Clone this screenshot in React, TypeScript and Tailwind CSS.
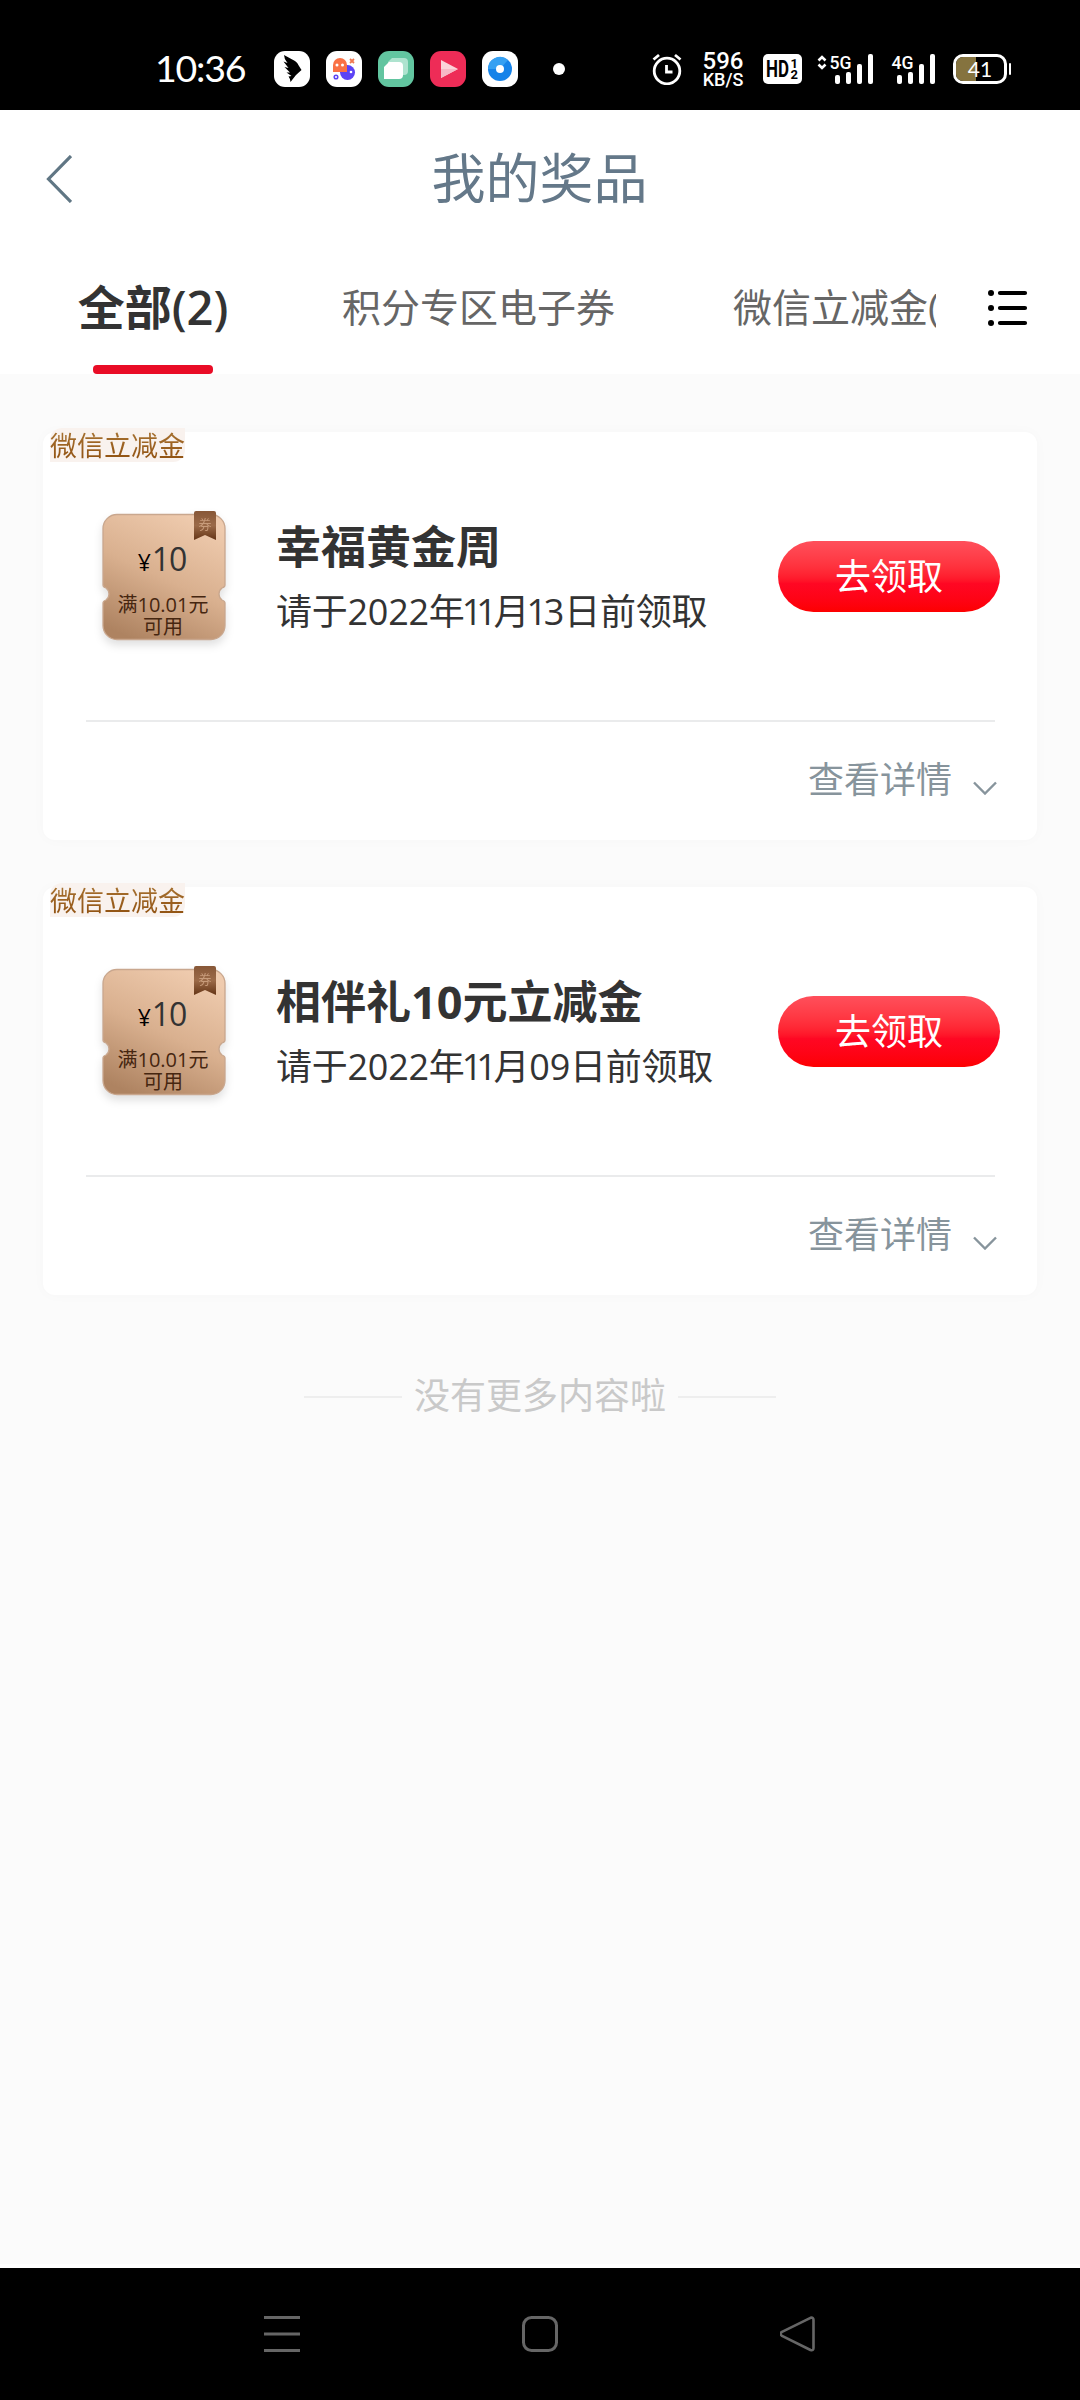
import { Fragment, ReactNode } from "react"

type Prize = {
    id: number
    tag: string
    amount: string
    title: string
    date: string
}

const prizes: Prize[] = [
    { id: 1, tag: "微信立减金", amount: "10", title: "幸福黄金周", date: "请于2022年11月13日前领取" },
    { id: 2, tag: "微信立减金", amount: "10", title: "相伴礼10元立减金", date: "请于2022年11月09日前领取" },
]

// the digit 1 is set tighter than the other figures
const Figures = ({ text }: { text: string }) => (
    <>
        {text.split(/(1)/).map((part, i) =>
            part === "1" ? <span key={i} className="-ml-[0.08em] tracking-[-0.09em]">1</span> : <Fragment key={i}>{part}</Fragment>
        )}
    </>
)

const AppIcon = ({ className, children }: { className: string, children: ReactNode }) => (
    <div className={`size-9 rounded-[11px] overflow-hidden ${className}`}>
        <svg viewBox="0 0 36 36" className="size-9">{children}</svg>
    </div>
)

const Signal = ({ label, arrows, className }: { label: string, arrows?: boolean, className: string }) => (
    <svg viewBox="0 0 56 32" className={className} fill="#fff">
        {arrows && <path d="M1.5 7.5 5 4l3.5 3.5M1.5 11.500 5 15l3.500-3.500" fill="none" stroke="#fff" strokeWidth="2.6" />}
        <text x="12.5" y="15.5" fontSize="19" fontWeight="500" textLength="22" lengthAdjust="spacingAndGlyphs" fontFamily="Roboto">{label}</text>
        <rect x="18" y="22" width="5" height="9" rx="2" />
        <rect x="29" y="19" width="5" height="12" rx="2" />
        <rect x="40" y="11" width="5" height="20" rx="2" />
        <rect x="51" y="1" width="5" height="30" rx="2" />
    </svg>
)

const StatusBar = () => (
    <div className="h-[110px] shrink-0 bg-black text-white flex items-center pl-[155px] pt-7">
        <span className="w-[119px] h-[82px] leading-[80px] font-[Lato,sans-serif] text-[37.5px] tracking-[-1.2px]">10:36</span>
        <div className="flex gap-4 h-[82px] items-center">
            <AppIcon className="bg-white">
                <path d="M10 4 21 10Q24 12 25 15L27.500 19 22 24 16.500 31Q16.500 28 14.500 25.500L17.500 25 12.500 21.500 16 21.500 10.500 16 14.500 17 9.500 10.500 13.500 12Q10 8 10 4Z" fill="#000" />
            </AppIcon>
            <AppIcon className="bg-white">
                <circle cx="21.5" cy="21.5" r="7.5" fill="#5c43f5" />
                <path d="M7 21v-7a7 7 0 0 1 14 0v7Z" fill="#fa7145" />
                <circle cx="11" cy="14" r="1.5" fill="#fff" />
                <circle cx="16.5" cy="14" r="1.5" fill="#fff" />
                <circle cx="25" cy="21" r="1.3" fill="#fff" />
                <path d="m24 8 4 4m0-4-4 4" stroke="#f07850" strokeWidth="1.8" />
                <circle cx="10" cy="26" r="1.8" fill="none" stroke="#5c43f5" strokeWidth="1.5" />
            </AppIcon>
            <AppIcon className="bg-[#62c5a0]">
                <path d="M14 7h12a4 4 0 0 1 4 4v9a4 4 0 0 1-4 4H10V11Z" fill="#aee3cf" />
                <path d="M11 11h10a4 4 0 0 1 4 4v9a4 4 0 0 1-4 4H6V16Z" fill="#fff" />
            </AppIcon>
            <AppIcon className="bg-[#ee2c57]">
                <path d="M11 9v18l17-9Z" fill="#fbd3da" />
                <path d="M11 27 28 18H11Z" fill="#f7b9c7" />
            </AppIcon>
            <AppIcon className="bg-white">
                <circle cx="18" cy="18" r="12" fill="#1583e9" />
                <path d="M6 18a12 12 0 0 1 20-9L18 18Z" fill="#35a0f2" />
                <circle cx="18" cy="18" r="4" fill="#fff" />
            </AppIcon>
            <span className="ml-[19px] size-3 rounded-full bg-white" />
        </div>
        <div className="flex items-center ml-[87px] h-[82px]">
            <svg viewBox="0 0 30 32" className="w-[30px] h-8" fill="none" stroke="#fff" strokeWidth="2.8">
                <circle cx="15" cy="18" r="12.8" />
                <path d="M14.5 12v7h6M1.5 6.500 7 2m16 0 5.500 4.500" />
            </svg>
            <div className="ml-5 w-[42px] flex flex-col items-center font-[Roboto,sans-serif]">
                <span className="text-[24px] leading-[20px] font-medium">596</span>
                <span className="text-[18px] leading-[17px] font-medium whitespace-nowrap">KB/S</span>
            </div>
            <svg viewBox="0 0 39 30" className="ml-[19px] w-[39px] h-[30px]" fontFamily="Roboto" fontWeight="700">
                <rect width="39" height="30" rx="5" fill="#fff" />
                <text x="3" y="23" fontSize="23" textLength="23" lengthAdjust="spacingAndGlyphs">HD</text>
                <text x="27.5" y="13.5" fontSize="13">1</text>
                <text x="27.5" y="25" fontSize="13">2</text>
            </svg>
            <Signal label="5G" arrows className="ml-[15px] w-14 h-8" />
            <Signal label="4G" className="ml-1.5 w-14 h-8" />
            <div className="ml-[18px] relative w-[54px] h-[30px] rounded-[10px] border-3 border-white overflow-hidden text-center text-[21px] leading-[23px] font-[Lato,sans-serif]">
                <div className="absolute left-0 top-0 h-full w-5 bg-[#85733f]" />
                <span className="relative">41</span>
            </div>
            <div className="ml-0.5 w-[2px] h-3 bg-white rounded" />
        </div>
    </div>
)

const Header = () => (
    <div className="h-[138px] shrink-0 bg-white flex items-center px-[46px]">
        <svg viewBox="0 0 26 48" className="w-[26px] h-12" fill="none" stroke="#607684" strokeWidth="3.2">
            <path d="M25 1 2.5 24 25 47" />
        </svg>
        <h1 className="flex-1 text-center text-[54px] leading-[60px] text-[#647889] pr-[27px] pb-[2px]">我的奖品</h1>
    </div>
)

const Tabs = () => (
    <div className="h-[126px] shrink-0 bg-white flex">
        <div className="w-[936px] flex whitespace-nowrap overflow-hidden">
            <div className="ml-[75px] w-[156px] flex flex-col items-center shrink-0">
                <span className="h-[117px] text-[47px] leading-[119px] font-bold text-[#333]">全部<span className="font-semibold">(2)</span></span>
                <span className="w-[120px] h-[9px] rounded bg-[#e90c26]" />
            </div>
            <span className="ml-[111px] w-[273px] shrink-0 text-[39px] leading-[117px] text-[#666]">积分专区电子券</span>
            <span className="ml-[118px] shrink-0 text-[39px] leading-[117px] text-[#666]">微信立减金(</span>
        </div>
        <svg viewBox="0 0 40 36" className="ml-[52px] mt-[42px] w-10 h-9" stroke="#000" strokeWidth="4.2" strokeLinecap="round">
            <path d="M12 3h25M12 18h25M12 33h25" />
            <path d="M3 3h.01M3 18h.01M3 33h.01" strokeWidth="6" />
        </svg>
    </div>
)

const Coupon = ({ amount, id }: { amount: string, id: number }) => (
    <div className="relative w-[124px] h-[130px]">
        <svg viewBox="0 0 124 130" className="absolute inset-0 w-[124px] h-[130px] overflow-visible drop-shadow-[0_5px_4px_rgba(0,0,0,0.12)]">
            <defs>
                <linearGradient id={`coupon-${id}`} x1="0.7" y1="0" x2="0.25" y2="1">
                    <stop offset="0" stopColor="#efcbae" />
                    <stop offset="0.5" stopColor="#d9b08f" />
                    <stop offset="1" stopColor="#ae8361" />
                </linearGradient>
                <linearGradient id={`ribbon-${id}`} x1="0" y1="0" x2="0" y2="1">
                    <stop offset="0" stopColor="#875737" />
                    <stop offset="0.5" stopColor="#9b6a48" />
                    <stop offset="1" stopColor="#653516" />
                </linearGradient>
            </defs>
            <path d="M15 3.5H109A14 14 0 0 1 123 17.500V74Q123 76 120 77A7.500 7.500 0 0 0 120 89Q123 90 123 92V114.500A14 14 0 0 1 109 128.500H15A14 14 0 0 1 1 114.500V92Q1 90 4 89A7.500 7.500 0 0 0 4 77Q1 76 1 74V17.500A14 14 0 0 1 15 3.500Z" fill={`url(#coupon-${id})`} stroke="#c9a78e" strokeWidth="1.3" />
            <path d="M94 0h18q2 0 2 2v27l-11-5-11 5V2q0-2 2-2Z" fill={`url(#ribbon-${id})`} />
            <text x="103" y="18" textAnchor="middle" fontSize="13" fill="#c79b7a">券</text>
        </svg>
        <div className="relative pt-[30px] pr-0.5 flex flex-col items-center">
            <div className="flex items-baseline leading-[36px] text-[#333]">
                <span className="text-[23px] text-black">¥</span>
                <span className="text-[32px] leading-[36px] tracking-[-1px] ml-px pr-0.5">{amount}</span>
            </div>
            <div className="mt-[14px] text-[20px] leading-[22px] text-center whitespace-nowrap text-[#462610]">
                满10.01元<br />可用
            </div>
        </div>
    </div>
)

const PrizeCard = ({ prize }: { prize: Prize }) => (
    <div className="h-[408px] bg-white rounded-xl shadow-[0_0_14px_rgba(0,0,0,0.025)]">
        <div className="-mt-1 ml-[7px] w-[135px] h-[34px] rounded-tl-xl rounded-br-xl bg-[#f9f2ee]">
            <span className="block whitespace-nowrap text-[27px] leading-[35px] bg-linear-to-b from-[#a87432] to-[#8f4f0c] bg-clip-text text-transparent">{prize.tag}</span>
        </div>
        <div className="mt-[49px] ml-[59px] mr-[37px] h-[131px] flex">
            <Coupon amount={prize.amount} id={prize.id} />
            <div className="ml-[50px] flex-1 whitespace-nowrap text-[#333]">
                <h2 className="mt-[10px] text-[45px] leading-[52px] font-bold">{prize.title}</h2>
                <p className="mt-[14px] text-[36px] leading-[49px] tracking-[-0.25px]"><Figures text={prize.date} /></p>
            </div>
            <button className="mt-[30px] w-[222px] h-[71px] rounded-full bg-linear-to-b from-[#ff4f5b] via-[#ff0723] via-60% to-[#fd0000] text-white text-[36px] leading-[70px]">去领取</button>
        </div>
        <div className="mt-[78px] ml-[43px] mr-[42px] h-[2px] bg-[#eaebec]" />
        <div className="mt-8 mr-10 flex justify-end text-[#87949c]">
            <span className="text-[36px] leading-[52px]">查看详情</span>
            <svg viewBox="0 0 24 14" className="ml-[21px] mt-[27px] w-6 h-3.5" fill="none" stroke="currentColor" strokeWidth="2.4">
                <path d="M1 1.5 12 12.500 23 1.500" />
            </svg>
        </div>
    </div>
)

const NavBar = () => (
    <div className="h-[132px] shrink-0 bg-black flex justify-between px-[264px] pt-12">
        <svg viewBox="0 0 36 36" className="size-9" stroke="#666" strokeWidth="3">
            <path d="M0 1.5h36M0 18h36M0 34.500h36" />
        </svg>
        <svg viewBox="0 0 36 36" className="size-9" fill="none" stroke="#666" strokeWidth="3">
            <rect x="1.5" y="1.5" width="33" height="33" rx="8" />
        </svg>
        <svg viewBox="0 0 36 36" className="size-9" fill="none" stroke="#666" strokeWidth="2.6" strokeLinejoin="round">
            <path d="M30.5 1.800 2 15.800q-3 2 0 4L30.500 34q3 1 3-2V4q0-3-3-2.200Z" />
        </svg>
    </div>
)

const App = () => {
    return <div className="w-[1080px] h-[2400px] flex flex-col bg-[#fbfbfb] overflow-hidden font-['Open_Sans','Noto_Sans_CJK_SC',sans-serif]">
        <StatusBar />
        <Header />
        <Tabs />
        <div className="flex-1 px-[43px] pt-[58px] border-b-4 border-white">
            <div className="flex flex-col gap-[47px]">
                {prizes.map(prize => <PrizeCard key={prize.id} prize={prize} />)}
            </div>
            <div className="mt-[75px] flex items-center justify-center gap-3 text-[36px] leading-[52px] text-[#c9c9c9]">
                <span className="mt-0.5 w-[98px] h-[2px] bg-[#eee]" />
                没有更多内容啦
                <span className="mt-0.5 w-[98px] h-[2px] bg-[#eee]" />
            </div>
        </div>
        <NavBar />
    </div>
}

export default App
